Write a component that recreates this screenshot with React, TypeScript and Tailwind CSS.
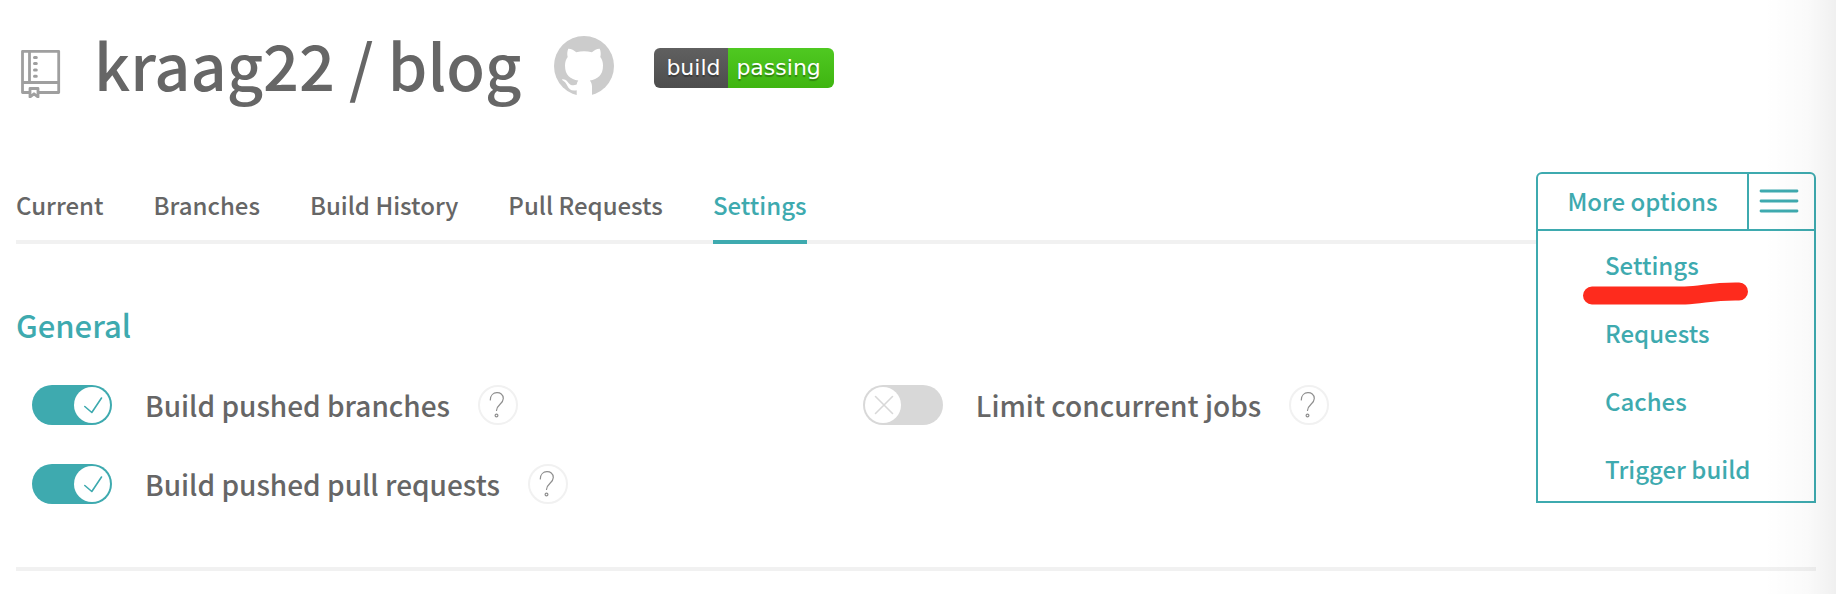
import { useId, useState } from "react";

const tabs = ["Current", "Branches", "Build History", "Pull Requests", "Settings"];
const menuItems = ["Settings", "Requests", "Caches", "Trigger build"];

function RepoIcon() {
  return (
    <svg viewBox="0 0 40 50" className="mt-12 h-[50px] w-10 shrink-0" fill="none" stroke="#9f9f9f" aria-hidden="true">
      <g strokeWidth="2.8">
        <path d="M8 44.500H1.500V3.300h36.200v41.200H18" strokeLinejoin="round" />
        <path d="M8.500 3.300v31.200M1.500 34.500h36.200" />
        <path d="M9 49V40.500h8V49l-4-3.200z" strokeLinejoin="round" />
      </g>
      <path d="M13.500 9.500h1.800M13.500 15.600h1.800M13.500 22h1.800M13.500 28.300h1.800" strokeWidth="3" strokeLinecap="round" />
    </svg>
  );
}

function GithubMark() {
  return (
    <svg viewBox="0 0 60 60" className="size-[60px]" aria-hidden="true">
      <circle cx="30" cy="30" r="30" fill="#cccccc" />
      <path
        fill="#ffffff"
        d="M14.300 12.800C17 12.600 20 14.400 22.300 16.200Q30 14.400 37.900 16.200C40.200 14.400 43.200 12.600 45.700 12.800C46.900 15.500 47 18.500 46.300 21C48 23.300 49 26 49 29.500C49 39.500 43.500 43.200 35.800 44.500C37.200 46 38 48 38 50.500V60H22.700V54.300C17.500 55.200 15 53.600 13.300 49.800C12.300 47.300 11.200 45.800 8.500 44.200C7 43 9.500 42.800 11.200 43.700C13 44.600 13.800 46 15 47.500C17 49.800 20 49.700 22.700 48.600C22.900 47 23.400 45.600 24.300 44.500C16.500 43.200 11 39.500 11 29.500C11 26 12 23.300 13.700 21C13 18.500 13.100 15.500 14.300 12.800Z"
      />
    </svg>
  );
}

function Toggle({ label, initial }: { label: string; initial: boolean }) {
  const id = useId();
  const [on, setOn] = useState(initial);
  return (
    <div className="flex h-10 items-center pl-4">
      <label htmlFor={id} className="flex cursor-pointer items-center gap-[33px]">
        <input
          id={id}
          type="checkbox"
          role="switch"
          className="peer sr-only"
          checked={on}
          onChange={(e) => setOn(e.target.checked)}
        />
        <span
          className={
            on
              ? "flex h-10 w-20 shrink-0 justify-end rounded-full bg-[#3eaaaf] p-0.5"
              : "flex h-10 w-20 shrink-0 justify-start rounded-full bg-[#d8d8d8] p-0.5"
          }
        >
          <svg viewBox="0 0 36 36" className="size-9 rounded-full bg-white" fill="none" strokeWidth="1.600" strokeLinecap="round" strokeLinejoin="round" aria-hidden="true">
            {on ? (
              <path d="M10.800 19.500l7 6L27.500 11" stroke="#3eaaaf" />
            ) : (
              <path d="M10.500 9.500l17 17M27.500 9.500l-17 17" stroke="#d8d8d8" />
            )}
          </svg>
        </span>
        <span className="text-[28px] leading-[38px]">{label}</span>
      </label>
      <button type="button" aria-label={"Help: " + label} className="ml-7 size-10 rounded-full border-2 border-[#f1f1f1]">
        <svg viewBox="0 0 36 36" className="size-9" fill="none" stroke="#8f8f8f" strokeWidth="1.200" strokeLinecap="round" aria-hidden="true">
          <path d="M10.300 13C10.300 3.500 23.300 3.500 23.300 11.500C23.300 17 16.700 17.500 16.500 23.500" />
          <circle cx="16.500" cy="28.500" r="1.400" />
        </svg>
      </button>
    </div>
  );
}

function MoreOptions() {
  const [open, setOpen] = useState(true);
  return (
    <div className="relative w-[280px] shrink-0 text-[#3eaaaf]">
      <button
        type="button"
        aria-expanded={open}
        onClick={() => setOpen(!open)}
        className="flex h-[59px] w-full cursor-pointer rounded-t-md border-2 border-[#3eaaaf] bg-white font-medium"
      >
        <span className="grow pt-[11px] text-[24px] leading-8">More options</span>
        <span className="flex w-[67px] items-center self-stretch border-l-2 border-[#3eaaaf] pb-0.5 pl-2.5">
          <svg viewBox="0 0 40 26" className="h-[26px] w-10" stroke="#3eaaaf" strokeWidth="2.800" strokeLinecap="round" aria-hidden="true">
            <path d="M2 3h36M2 13h36M2 23h36" />
          </svg>
        </span>
      </button>
      {open && (
        <ul className="absolute inset-x-0 top-full flex h-[272px] flex-col gap-9 border-2 border-t-0 border-[#3eaaaf] bg-white pt-[18px] pl-[67px] text-[24px] leading-8">
          {menuItems.map((item, i) => (
            <li key={item} className="relative">
              <a href="#" className="whitespace-nowrap">{item}</a>
              {i === 0 && (
                <svg viewBox="0 0 168 26" className="absolute -left-6 top-[30px] h-[26px] w-[168px]" fill="none" aria-hidden="true">
                  <path d="M11 16.500H104C124 15.500 131 12 158 12.500" stroke="#fe2b1d" strokeWidth="18" strokeLinecap="round" strokeLinejoin="round" />
                </svg>
              )}
            </li>
          ))}
        </ul>
      )}
    </div>
  );
}

export default function App() {
  return (
    <div className="relative min-h-screen overflow-hidden bg-white pr-5 pb-4 pl-4 font-['Noto_Sans_CJK_SC',sans-serif] font-medium text-[#666666]">
      <header className="flex h-[136px] items-start pl-[5px]">
        <RepoIcon />
        <h1 className="mr-[33px] ml-[33px] pt-7 text-[63px] leading-[72px] whitespace-nowrap">kraag22 / blog</h1>
        <a href="#" aria-label="GitHub" className="mt-9">
          <GithubMark />
        </a>
        <a
          href="#"
          className="mt-12 ml-10 flex h-10 overflow-hidden rounded-md font-['DejaVu_Sans',sans-serif] text-[22px] leading-10 font-normal text-white [text-shadow:0_2px_1px_rgb(0_0_0/0.3)]"
        >
          <span className="w-[74px] bg-linear-to-b from-[#606060] to-[#4d4d4d] pl-3">build</span>
          <span className="w-[106px] bg-linear-to-b from-[#4fc921] to-[#3fb510] pl-2">passing</span>
        </a>
      </header>

      <div className="mt-9 flex h-[72px] items-start">
        <nav className="flex h-full grow gap-[50px] border-b-4 border-[#f1f1f1] text-[24px] leading-8 whitespace-nowrap">
          {tabs.map((tab) => (
            <a
              key={tab}
              href="#"
              className={
                tab === "Settings"
                  ? "h-[72px] border-b-4 border-[#3eaaaf] pt-[17px] text-[#3eaaaf]"
                  : "h-[72px] pt-[17px]"
              }
            >
              {tab}
            </a>
          ))}
        </nav>
        <MoreOptions />
      </div>

      <section className="border-b-4 border-[#f1f1f1] pt-[61px] pb-[63px]">
        <h2 className="text-[31px] leading-10 text-[#3eaaaf]">General</h2>
        <div className="mt-10 grid grid-cols-[6fr_7fr] gap-y-[39px]">
          <Toggle label="Build pushed branches" initial={true} />
          <Toggle label="Limit concurrent jobs" initial={false} />
          <Toggle label="Build pushed pull requests" initial={true} />
        </div>
      </section>

      <div className="pointer-events-none absolute inset-y-0 right-0 w-18 bg-linear-to-r from-black/0 via-black/2 via-60% to-black/6" />
    </div>
  );
}
